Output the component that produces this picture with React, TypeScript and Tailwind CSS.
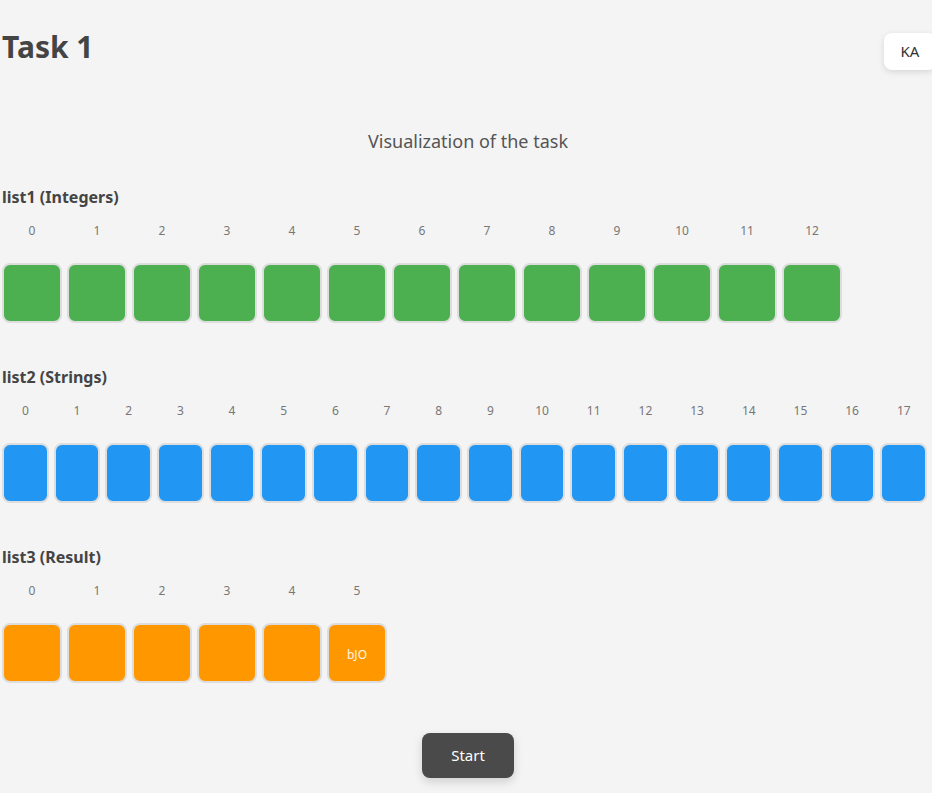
import React from "react";

type ListSpec = {
  title: string;
  count: number;
  color: string;
  values?: Record<number, string>;
};

const lists: ListSpec[] = [
  { title: "list1 (Integers)", count: 13, color: "bg-[#4caf50]" },
  { title: "list2 (Strings)", count: 18, color: "bg-[#2196f3]" },
  { title: "list3 (Result)", count: 6, color: "bg-[#ff9800]", values: { 5: "bJO" } },
];

const ListRow: React.FC<{ spec: ListSpec; first?: boolean }> = ({ spec, first }) => {
  const items = Array.from({ length: spec.count }, (_, i) => i);
  return (
    <section className={first ? "" : "mt-[42px]"}>
      <h2 className="h-[24px] text-[16px] leading-[24px] font-bold text-[#444]">
        {spec.title}
      </h2>
      <div className="mt-[14px] flex w-[925px] gap-[5px]">
        {items.map((i) => (
          <div key={i} className="flex min-w-0 shrink basis-[60px] flex-col items-center">
            <span className="h-[16px] text-[12px] leading-[16px] text-[#777]">{i}</span>
            <div
              className={`mt-[24px] flex h-[60px] w-full items-center justify-center rounded-[8px] border-2 border-[#dddddd] ${spec.color}`}
            >
              <span className="mt-[4px] text-[12px] text-white/90">
                {spec.values?.[i] ?? ""}
              </span>
            </div>
          </div>
        ))}
      </div>
    </section>
  );
};

export default function App() {
  return (
    <div
      className="min-h-[793px] w-full overflow-hidden bg-[#f4f4f4]"
      style={{ fontFamily: '"Noto Sans", "Open Sans", sans-serif' }}
    >
      <div className="w-[936px] px-[2px]">
        <header className="flex items-start justify-between pt-[27px]">
          <h1 className="text-[30px] leading-[40px] font-bold text-[#444]">Task 1</h1>
          <button className="mt-[6px] mr-[-2px] h-[37px] w-[52px] rounded-[8px] bg-white text-[15px] text-[#333] shadow-[0_2px_6px_rgba(0,0,0,0.12)]">
            KA
          </button>
        </header>

        <p className="mt-[59px] text-center text-[18px] leading-[24px] text-[#555]">
          Visualization of the task
        </p>

        <div className="mt-[32px]">
          {lists.map((l, idx) => (
            <ListRow key={l.title} spec={l} first={idx === 0} />
          ))}
        </div>

        <div className="mt-[50px] flex justify-center">
          <button className="h-[45px] w-[92px] rounded-[8px] bg-[#4a4a4a] text-[15px] text-white shadow-[0_4px_10px_rgba(0,0,0,0.15)]">
            Start
          </button>
        </div>
      </div>
    </div>
  );
}
